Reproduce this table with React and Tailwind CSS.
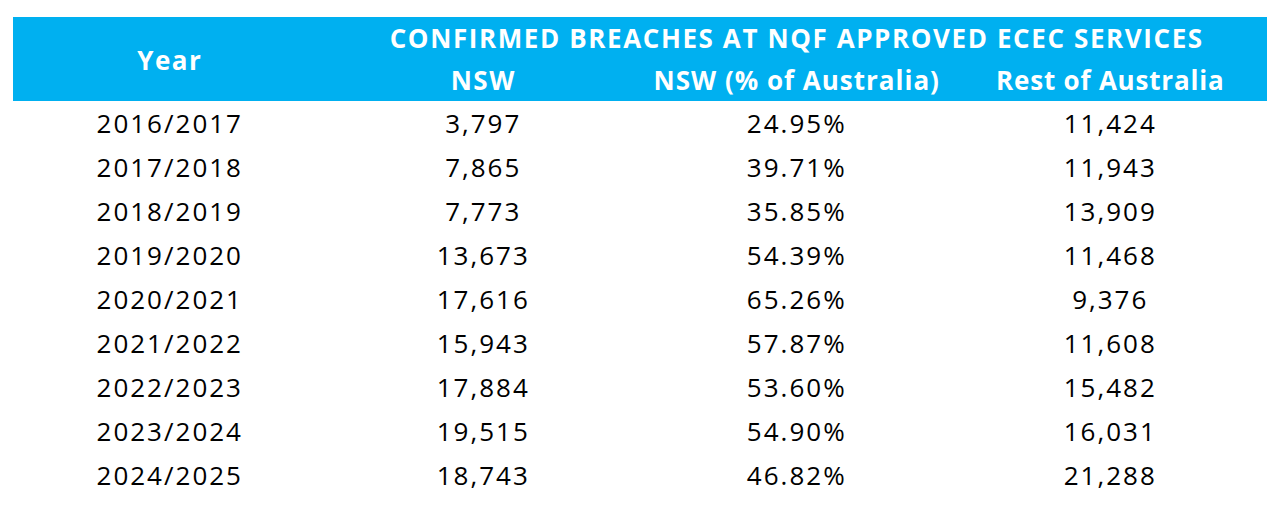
import React from "react";

const rows = [
  ["2016/2017", "3,797", "24.95%", "11,424"],
  ["2017/2018", "7,865", "39.71%", "11,943"],
  ["2018/2019", "7,773", "35.85%", "13,909"],
  ["2019/2020", "13,673", "54.39%", "11,468"],
  ["2020/2021", "17,616", "65.26%", "9,376"],
  ["2021/2022", "15,943", "57.87%", "11,608"],
  ["2022/2023", "17,884", "53.60%", "15,482"],
  ["2023/2024", "19,515", "54.90%", "16,031"],
  ["2024/2025", "18,743", "46.82%", "21,288"],
];

export default function App() {
  return (
    <div
      className="w-[1280px] h-[507px] bg-white pl-[13px] pt-[17px]"
      style={{ fontFamily: '"Open Sans", "Noto Sans", sans-serif' }}
    >
      <div className="w-[1254px]">
        <div className="grid grid-cols-4 bg-[#00b0f0] text-white font-bold text-[26px] h-[84px]">
          <div className="row-span-2 flex items-center justify-center tracking-[1.5px] pt-[2px]">Year</div>
          <div className="col-span-3 flex items-center justify-center h-[42px] tracking-[1.6px] pt-[1px]">
            CONFIRMED BREACHES AT NQF APPROVED ECEC SERVICES
          </div>
          <div className="flex items-center justify-center h-[42px] tracking-[1.5px] pt-[1px]">NSW</div>
          <div className="flex items-center justify-center h-[42px] tracking-[1px] pt-[1px]">NSW (% of Australia)</div>
          <div className="flex items-center justify-center h-[42px] tracking-[0.8px] pt-[1px]">Rest of Australia</div>
        </div>
        {rows.map((r) => (
          <div key={r[0]} className="grid grid-cols-4 h-[44px] text-[26px] text-black tracking-[2px]">
            {r.map((c, i) => (
              <div key={i} className="flex items-center justify-center">
                {c}
              </div>
            ))}
          </div>
        ))}
      </div>
    </div>
  );
}
